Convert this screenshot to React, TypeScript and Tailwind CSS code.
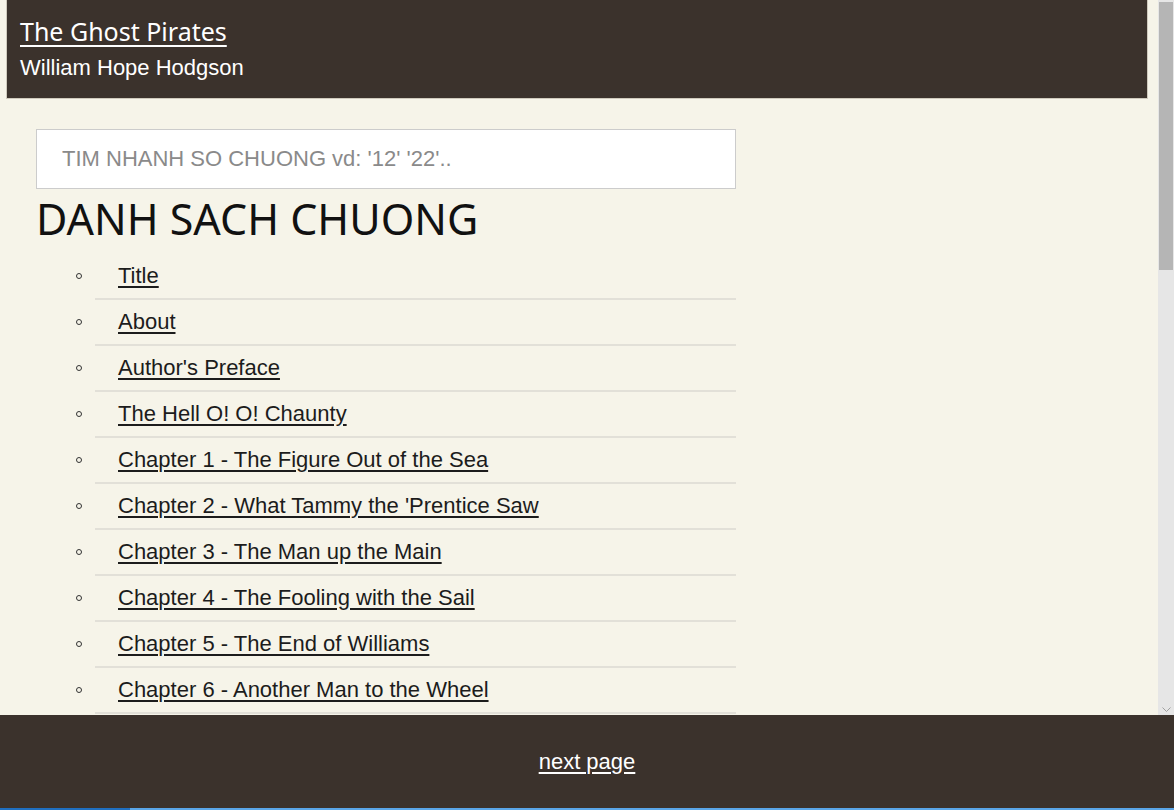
const chapters = [
  "Title",
  "About",
  "Author's Preface",
  "The Hell O! O! Chaunty",
  "Chapter 1 - The Figure Out of the Sea",
  "Chapter 2 - What Tammy the 'Prentice Saw",
  "Chapter 3 - The Man up the Main",
  "Chapter 4 - The Fooling with the Sail",
  "Chapter 5 - The End of Williams",
  "Chapter 6 - Another Man to the Wheel",
]

export default function App() {
  return (
    <div className="w-[1174px] h-[810px] flex flex-col overflow-hidden bg-[#f6f4e9] font-['Liberation_Sans',Arial,sans-serif]">
      <div className="flex h-[715px] shrink-0">
        <div className="w-[1158px] overflow-hidden">
          <header className="ml-[6px] w-[1142px] h-[99px] bg-[#3b322c] border border-[#cfcabd] border-t-0 px-[13px] pt-[14px]">
            <a href="#" className="block w-fit text-[25px] leading-[34px] text-white underline underline-offset-[4px] font-['Noto_Sans',sans-serif]">
              The Ghost Pirates
            </a>
            <div className="text-[22px] leading-[30px] text-white mt-[5px]">William Hope Hodgson</div>
          </header>
          <div className="pl-[36px] pt-[30px]">
            <input
              className="w-[700px] h-[60px] bg-white border border-[#cccccc] px-[25px] text-[22px] outline-none placeholder:text-[#8a8a8a]"
              placeholder="TIM NHANH SO CHUONG vd: '12' '22'.."
            />
            <h1 className="text-[43px] leading-[60px] text-[#111] font-['Noto_Sans',sans-serif]">DANH SACH CHUONG</h1>
            <ul className="pl-[59px] w-[700px] mt-[5px]">
              {chapters.map((c) => (
                <li key={c} className="h-[46px] flex items-center border-b-2 border-[#e2e0d8]">
                  <span className="-ml-[19px] w-[6px] h-[6px] rounded-full border border-[#333] shrink-0" />
                  <a href="#" className="ml-[36px] -mt-[2px] text-[22px] text-[#1c1c1c] underline underline-offset-[3px]">
                    {c}
                  </a>
                </li>
              ))}
            </ul>
          </div>
        </div>
        <div className="w-[16px] bg-[#e6e6e6] flex flex-col">
          <div className="h-[2px]" />
          <div className="mx-[1px] h-[268px] bg-[#b5b5b5]" />
          <div className="flex-1" />
          <div className="h-[12px] flex items-center justify-center">
            <svg width="9" height="5" viewBox="0 0 9 5">
              <path d="M0.5 0.5 L4.5 4.5 L8.5 0.5" fill="none" stroke="#a0a0a0" />
            </svg>
          </div>
        </div>
      </div>
      <footer className="h-[93px] bg-[#3b322c] flex items-center justify-center">
        <a href="#" className="text-[22px] text-white underline underline-offset-[3px]">
          next page
        </a>
      </footer>
      <div className="h-[2px] flex">
        <div className="w-[130px] bg-[#1f6fc0]" />
        <div className="flex-1 bg-[#5aa6e8]" />
      </div>
    </div>
  )
}
